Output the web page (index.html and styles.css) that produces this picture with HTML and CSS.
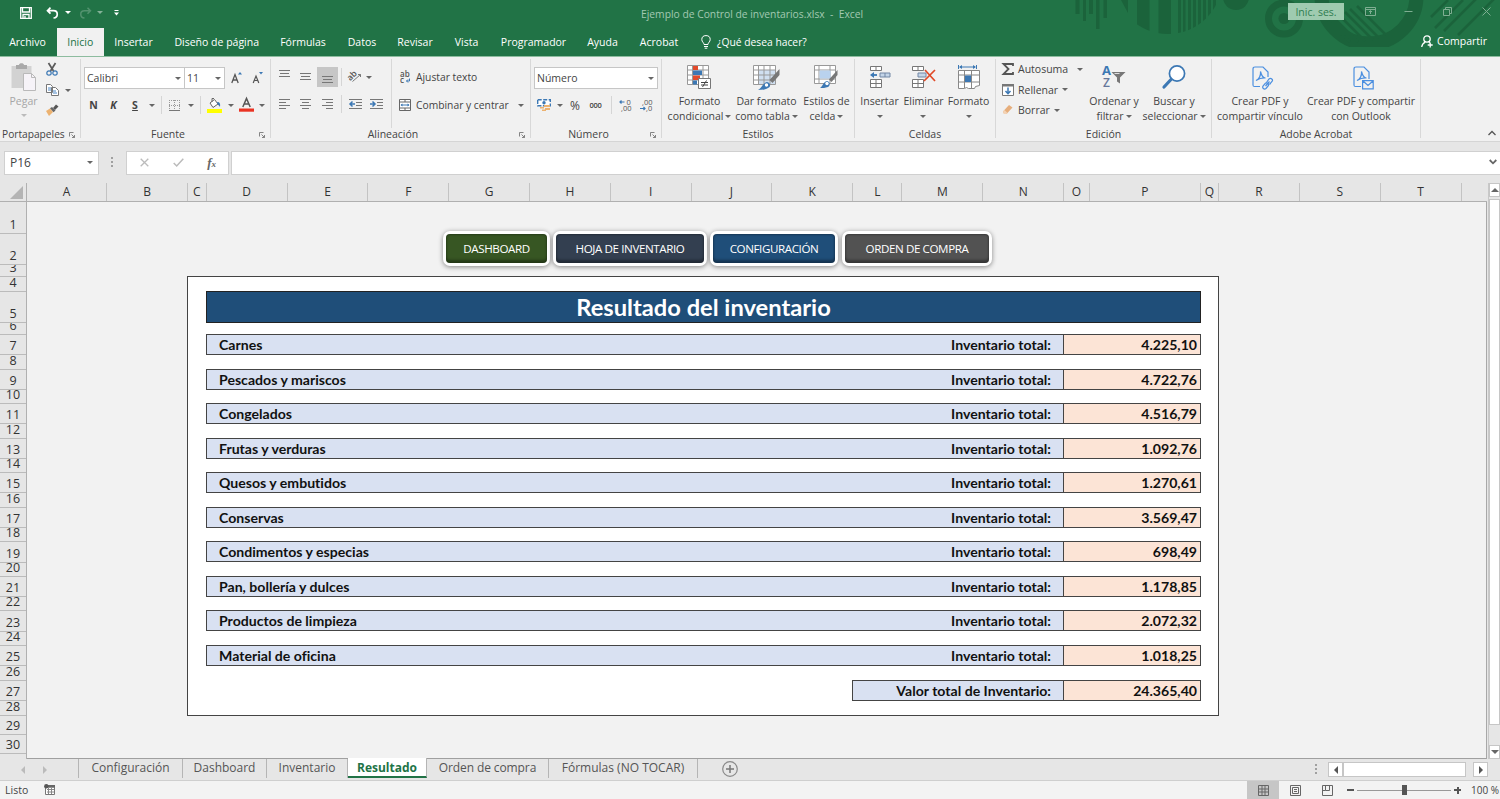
FILE: index.html
```html
<!DOCTYPE html>
<html lang="es">
<head>
  <meta charset="utf-8">
  <title>Ejemplo de Control de inventarios.xlsx - Excel</title>
  <link rel="stylesheet" href="styles.css">
</head>
<body>
  <header class="header">
    <svg class="header-art" width="440" height="56" viewBox="0 0 440 56">
      <defs>
        <clipPath id="disc"><circle cx="108" cy="-20" r="54"/></clipPath>
        <clipPath id="flat"><path d="M240 0H370V47H240Z"/></clipPath>
      </defs>
      <path d="M15.5 0h4v14h-4zM23 0h3v21h-3zM29 0h4v14h-4zM36 0h3.500v29H36zM43.500 0H47v18h-3.500z"/>
      <path clip-path="url(#disc)" d="M61 0h7v13zM77 0h12.500v40H77zM98.500 0H111v40H98.500zM118 0h3v40h-3zM123 0h2.500v40H123zM128 0h3v40h-3zM133 0h3v40h-3zM138 0h3v40h-3zM143 0h3v40h-3zM148 0h3v40h-3zM153 0h3v40h-3z"/>
      <circle cx="176" cy="-3" r="13"/>
      <circle cx="224" cy="18.500" r="5.500"/>
      <circle class="art-ring" cx="224" cy="18.500" r="15.500" stroke-width="7"/>
      <circle class="art-ring" clip-path="url(#flat)" cx="309" cy="-4" r="47.500" stroke-width="14"/>
      <path class="art-ring" stroke-width="2.600" d="M268 21l22 21M273 17l25 25M279 15l26 26M285 12l28 28M290 9l29 29M297 6l29 29M371 17l17-17M375 28l28-28M384 31l32-32M398 35l36-36"/>
    </svg>

    <div class="titlebar">
      <div class="quick-access">
        <svg width="12" height="12" viewBox="0 0 12 12"><path d="M.7.700h10.600v10.600H.7zM2.500 1v4h7V1M3 11V7.500h6V11M5 9v2" fill="none" stroke="#fff" stroke-width="1.300"/></svg>
        <svg width="13" height="12" viewBox="0 0 13 12"><path d="M4.500.700L1.500 3.700l3 3M2 3.700h5.500c5 0 5 6.800 0 7.300" fill="none" stroke="#fff" stroke-width="1.700"/></svg>
        <i class="caret light"></i>
        <svg class="dim" width="13" height="12" viewBox="0 0 13 12"><path d="M8.500.700l3 3-3 3M11 3.700H5.500c-5 0-5 6.800 0 7.300" fill="none" stroke="#8fb8a0" stroke-width="1.500"/></svg>
        <i class="caret light dim"></i>
        <svg width="5" height="6" viewBox="0 0 5 6"><path d="M.5.500h4" stroke="#fff"/><path d="M0 2.500h5L2.500 5.500z" fill="#fff"/></svg>
      </div>
      <div class="doc-title">Ejemplo de Control de inventarios.xlsx&nbsp; -&nbsp; Excel</div>
      <div class="window-tools">
        <button class="sign-in">Inic. ses.</button>
        <svg width="11" height="9" viewBox="0 0 11 9"><path d="M.5.500h10v8H.5zM.5 2.500h10M5.500 7V4M4 5l1.500-1.500L7 5"/></svg>
        <svg width="9" height="9" viewBox="0 0 9 9"><path d="M.5 4.500h8"/></svg>
        <svg width="9" height="9" viewBox="0 0 9 9"><path d="M.5 2.500h6v6h-6zM2.500 2.500v-2h6v6h-2"/></svg>
        <svg width="9" height="9" viewBox="0 0 9 9"><path d="M.5.500l8 8M8.500.500l-8 8"/></svg>
      </div>
    </div>

    <nav class="tabs">
      <a class="t-file">Archivo</a>
      <a class="t-home active">Inicio</a>
      <a class="t-insert">Insertar</a>
      <a class="t-layout">Diseño de página</a>
      <a class="t-formulas">Fórmulas</a>
      <a class="t-data">Datos</a>
      <a class="t-review">Revisar</a>
      <a class="t-view">Vista</a>
      <a class="t-dev">Programador</a>
      <a class="t-help">Ayuda</a>
      <a class="t-acrobat">Acrobat</a>
      <span class="tell-me">
        <svg width="10" height="14" viewBox="0 0 10 14"><path d="M3 9.500C3 7.500.8 7 .8 4.600a4.200 4 0 0 1 8.400 0C9.200 7 7 7.500 7 9.500zM3 11.500h4M3.700 13.200h2.600" fill="none" stroke="#fff"/></svg>
        ¿Qué desea hacer?
      </span>
      <span class="share">
        <svg width="12" height="13" viewBox="0 0 12 13"><circle cx="6" cy="4" r="3.200"/><path d="M.7 12c.3-2.500 1.500-3.800 3.500-4.800M7.800 7.200l1 .8M9.200 7.500v5M6.700 10h5"/></svg>
        Compartir
      </span>
    </nav>
  </header>

  <section class="ribbon">
    <div class="group g-clipboard">
      <div class="group-body">
        <div class="paste">
          <svg width="25" height="28" viewBox="0 0 25 28"><path d="M.5 3h20v22H.5z" fill="#d2d2d2"/><path d="M5 2h3c0-2.500 5-2.500 5 0h3v4H5z" fill="#a9a9a9"/><path d="M12.500 10.500h8l4 4v13h-12z" fill="#f6f3f8" stroke="#b9b9b9"/><path d="M20.500 10.500v4h4" fill="none" stroke="#b9b9b9"/></svg>
          <span>Pegar</span>
          <i class="caret pale"></i>
        </div>
        <div class="clip-tools">
          <svg width="12" height="13" viewBox="0 0 12 13"><path d="M2.500 0l5 8M9.500 0l-5 8" stroke="#5a5a5a" stroke-width="1.700"/><circle cx="3" cy="10" r="2.200" fill="none" stroke="#3c78b4" stroke-width="1.200"/><circle cx="9" cy="10" r="2.200" fill="none" stroke="#3c78b4" stroke-width="1.200"/></svg>
          <div class="copy">
            <svg width="13" height="12" viewBox="0 0 13 12"><path d="M.5.500h4l2 2v6h-6zM5.500 3.500h4l3 3v5h-7z" fill="#fff" stroke="#777"/><path d="M2 4h3M2 6h3M7 7h3M7 9h4" stroke="#4a86c5"/></svg>
            <i class="caret"></i>
          </div>
          <svg width="13" height="12" viewBox="0 0 13 12"><path d="M0 7l4-2.500 3 3.500-4 4z" fill="#ecb270"/><path d="M4 4.200L6 3l3.500 3.500-2 1.700z" fill="#666"/><path d="M7 4l3-3.500 2.500 2L9 6z" fill="#555"/></svg>
        </div>
      </div>
      <div class="group-name">Portapapeles<svg class="launcher"><use href="#launch"/></svg></div>
    </div>

    <div class="group g-font">
      <div class="group-body stack">
        <div class="tool-row">
          <div class="select font-name">Calibri<i class="caret"></i></div>
          <div class="select font-size">11<i class="caret"></i></div>
          <svg class="grow" width="11" height="13" viewBox="0 0 11 13"><path d="M.8 12L4 3.500 7.200 12M2 9h4" fill="none" stroke="#555" stroke-width="1.300"/><path d="M7 3.500L9 1l2 2.500z" fill="#3c78b4"/></svg>
          <svg class="shrink" width="11" height="13" viewBox="0 0 11 13"><path d="M1.200 12L4 5l2.800 7M2.200 9.500h3.600" fill="none" stroke="#555" stroke-width="1.200"/><path d="M7 1l2 2.500L11 1z" fill="#3c78b4"/></svg>
        </div>
        <div class="font-tools">
          <b>N</b>
          <b><em>K</em></b>
          <b><u>S</u></b>
          <i class="caret"></i>
          <span class="sep"></span>
          <svg width="11" height="11" viewBox="0 0 11 11"><path d="M.5 0v11M10.500 0v11M0 .500h11M5.500 0v11M0 5.500h11" stroke="#999" stroke-dasharray="1 1"/><path d="M0 10.500h11" stroke="#777"/></svg>
          <i class="caret"></i>
          <span class="sep"></span>
          <svg width="15" height="15" viewBox="0 0 15 15"><path d="M3 5l4.500-3.500L11 6 6 9.500z" fill="#fff" stroke="#666"/><path d="M5 4V.500h2" fill="none" stroke="#666"/><path d="M10 4c3 0 3.500 2 3 5-1-1.500-1.500-2-2-2z" fill="#3c78b4"/><path d="M0 11h15v4H0z" fill="#ff0"/></svg>
          <i class="caret"></i>
          <svg width="15" height="14" viewBox="0 0 15 14"><path d="M3.800 9L7.500.500 11.200 9M5 6h5" fill="none" stroke="#555" stroke-width="1.500"/><path d="M0 10.500h15v3.200H0z" fill="#ea3323"/></svg>
          <i class="caret"></i>
        </div>
      </div>
      <div class="group-name">Fuente<svg class="launcher"><use href="#launch"/></svg></div>
    </div>

    <div class="group g-align">
      <div class="group-body">
        <div class="align-tools">
          <svg class="up" width="11" height="8" viewBox="0 0 11 8"><path d="M0 .500h11M1 3.500h9M0 6.500h11"/></svg>
          <svg width="11" height="8" viewBox="0 0 11 8"><path d="M0 .500h11M1 3.500h9M0 6.500h11"/></svg>
          <span class="pressed"><svg width="11" height="8" viewBox="0 0 11 8"><path d="M0 .500h11M1 3.500h9M0 6.500h11"/></svg></span>
          <span class="sep"></span>
          <svg class="orient" width="14" height="14" viewBox="0 0 14 14"><text x="0" y="9" font-size="8.500" font-weight="600" transform="rotate(-45 5 8)">ab</text><path d="M4.500 12.500l8-7M12.500 5.500v2.500M12.500 5.500H10"/></svg>
          <i class="caret orient-caret"></i>
          <svg width="11" height="10" viewBox="0 0 11 10"><path d="M0 .500h11M0 3.500h7M0 6.500h11M0 9.500h7"/></svg>
          <svg width="11" height="10" viewBox="0 0 11 10"><path d="M0 .500h11M2 3.500h7M0 6.500h11M2 9.500h7"/></svg>
          <svg width="11" height="10" viewBox="0 0 11 10"><path d="M0 .500h11M4 3.500h7M0 6.500h11M4 9.500h7"/></svg>
          <span class="sep"></span>
          <svg width="13" height="11" viewBox="0 0 13 11"><path d="M0 .500h13M7 3.500h6M7 6.500h6M0 9.500h13"/><path class="blue" d="M2 5h4M3.500 2.500L1 5l2.500 2.500"/></svg>
          <svg width="13" height="11" viewBox="0 0 13 11"><path d="M0 .500h13M7 3.500h6M7 6.500h6M0 9.500h13"/><path class="blue" d="M0 5h4M2.500 2.500L5 5 2.500 7.500"/></svg>
        </div>
        <div class="wrap-tools">
          <div>
            <svg width="11" height="13" viewBox="0 0 11 13"><text x="0" y="6" font-size="8" font-weight="600">ab</text><text x="0" y="12" font-size="8" font-weight="600">c</text><path d="M9.500 7.500v2.500H6.500M8 8.500L6.500 10 8 11.500" fill="none" stroke="#3c78b4"/></svg>
            <span>Ajustar texto</span>
          </div>
          <div>
            <svg width="12" height="12" viewBox="0 0 12 12"><path d="M.5.500h11v11H.5zM.5 3h11M.5 9h11M6 .500V3M6 9v2.500" fill="#fff" stroke="#666"/><path d="M2 6h8" stroke="#3c78b4"/><path d="M1.500 6l2-1.500v3zM10.500 6l-2-1.500v3z" fill="#3c78b4"/></svg>
            <span>Combinar y centrar</span>
            <i class="caret"></i>
          </div>
        </div>
      </div>
      <div class="group-name">Alineación<svg class="launcher"><use href="#launch"/></svg></div>
    </div>

    <div class="group g-number">
      <div class="group-body stack">
        <div class="tool-row"><div class="select num-format">Número<i class="caret"></i></div></div>
        <div class="num-tools">
          <svg width="14" height="13" viewBox="0 0 14 13"><path d="M.7.700h12.600v6H.7z" fill="#fff" stroke="#3c78b4" stroke-width="1.400" stroke-dasharray="4 1.500"/><circle cx="7" cy="3.700" r="1.700" fill="#3c78b4"/><path d="M7 6h6v2H7zM8 9h5v2H8zM3 8h4v1.500H3zM5 10.500h4v1.500H5z" fill="#ecb270"/></svg>
          <i class="caret"></i>
          <span class="percent">%</span>
          <span class="thousands">000</span>
          <span class="sep"></span>
          <svg width="12" height="13" viewBox="0 0 12 13"><text x="7.500" y="6" font-size="7.500">0</text><text x="2" y="12" font-size="7.500">,00</text><path d="M5.500 3H1M2.500 1.500L1 3l1.500 1.500" fill="none" stroke="#3c78b4" stroke-width="1.200"/></svg>
          <svg width="12" height="13" viewBox="0 0 12 13"><text x="2" y="6" font-size="7.500">,00</text><text x="6" y="12" font-size="7.500">,0</text><path d="M0 9.500h5M3.500 8L5 9.500 3.500 11" fill="none" stroke="#3c78b4" stroke-width="1.200"/></svg>
        </div>
      </div>
      <div class="group-name">Número<svg class="launcher"><use href="#launch"/></svg></div>
    </div>

    <div class="group g-styles">
      <div class="group-body">
        <div class="big">
          <svg width="25" height="25" viewBox="0 0 25 25"><path d="M.5.500h21v19H.5zM.5 5h21M.5 10h21M.5 15h21M5.500.500v19M16 .500v19" fill="#fff" stroke="#999"/><path d="M6 1h5v4H6zM6 10.500h7V15H6z" fill="#e24b2c"/><path d="M6 5.500h9V10H6zM6 15.500h4v4H6z" fill="#3c78b4"/><path d="M11.500 13.500h12v10h-12z" fill="#fff" stroke="#777"/><path d="M14 17.500h7M14 20h7M19.500 15.500l-4 6.500" stroke="#444"/></svg>
          <span>Formato<br>condicional<i class="caret"></i></span>
        </div>
        <div class="big">
          <svg width="27" height="26" viewBox="0 0 27 26"><path d="M.5.500h22v19H.5z" fill="#fff"/><path d="M6 5h16v14H6z" fill="#d0dff0"/><path d="M.5.500h22v19H.5zM.5 5h22M.5 10h22M.5 15h22M5.500.500v19M11 .500v19M17 .500v19" fill="none" stroke="#999"/><path d="M26.500 4v6l-7 8-3-3z" fill="#777"/><path d="M5 25c3-1 5-7 9-8 4 1 4 5 1 6-3 2-7 2-10 2z" fill="#3c78b4"/><circle cx="13.500" cy="20" r="1.700" fill="#fff"/></svg>
          <span>Dar formato<br>como tabla<i class="caret"></i></span>
        </div>
        <div class="big">
          <svg width="25" height="25" viewBox="0 0 25 25"><path d="M.5.500h21v18H.5zM.5 5h21M.5 14h21M5 .500v18M16 .500v18" fill="#fff" stroke="#999"/><path d="M5.500 5.500h11v8h-11z" fill="#b9d2ee"/><path d="M23.500 5v5l-6 7-2.500-2.500z" fill="#777"/><path d="M6 23c3-2 3-6 7-7 4 1 3 5 1 6-3 1-5 1-8 1z" fill="#3c78b4"/><circle cx="13" cy="18.500" r="1.700" fill="#fff"/></svg>
          <span>Estilos de<br>celda<i class="caret"></i></span>
        </div>
      </div>
      <div class="group-name">Estilos</div>
    </div>

    <div class="group g-cells">
      <div class="group-body">
        <div class="big">
          <svg width="22" height="24" viewBox="0 0 22 24"><path d="M1.500 1.500h11v4h-11zM7 1.500v4M1.500 14.500h11v8h-11zM7 14.500v8M1.500 18.500h11" fill="#fff" stroke="#777"/><path d="M11 8h10v4H11zM16 8v4" fill="#c4d5e8" stroke="#7387a5"/><path d="M3 10h5" stroke="#3c78b4" stroke-width="1.800"/><path d="M1 10l4-3v6z" fill="#3c78b4"/></svg>
          <span>Insertar<br><i class="caret"></i></span>
        </div>
        <div class="big">
          <svg width="25" height="24" viewBox="0 0 25 24"><path d="M1.500 1.500h11v4h-11zM7 1.500v4M1.500 14.500h11v8h-11zM7 14.500v8M1.500 18.500h11" fill="#fff" stroke="#777"/><path d="M7 8h8v4H7z" fill="#c4d5e8" stroke="#7387a5"/><path d="M14 5l10 11M24 5L13 16" stroke="#e04a28" stroke-width="1.700"/></svg>
          <span>Eliminar<br><i class="caret"></i></span>
        </div>
        <div class="big">
          <svg width="24" height="25" viewBox="0 0 24 25"><path d="M1.500 0v4M19.500 0v4M3 2h15" stroke="#3c78b4"/><path d="M2 2l3-2v4zM19 2l-3-2v4z" fill="#3c78b4"/><path d="M1.500 5.500h21v15l-4 1-1 2h-6l-2-1-2 1h-6zM1.500 10h21M1.500 17h21M7.500 5.500V23M14.500 5.500V23" fill="#fff" stroke="#888"/><path d="M8 10.500h6V17H8z" fill="#3c78b4"/></svg>
          <span>Formato<br><i class="caret"></i></span>
        </div>
      </div>
      <div class="group-name">Celdas</div>
    </div>

    <div class="group g-edit">
      <div class="group-body">
        <div class="edit-list">
          <div class="autosum"><svg width="12" height="12" viewBox="0 0 12 12"><path d="M11 3V1H1.500l5 5-5 5H11V9" fill="none" stroke="#555" stroke-width="1.800"/></svg>Autosuma<i class="caret"></i></div>
          <div><svg width="12" height="12" viewBox="0 0 12 12"><path d="M.5.500h11v11H.5z" fill="#fff" stroke="#777"/><path d="M0 0h12v2.500H0z" fill="#777"/><path d="M6 3.500V10M3.500 7L6 9.700 8.500 7" fill="none" stroke="#3c78b4" stroke-width="1.500"/></svg>Rellenar<i class="caret"></i></div>
          <div><svg width="12" height="12" viewBox="0 0 12 12"><path d="M1 7.500L7 1l3.500 2.500-6 6.500H2z" fill="#e6ae7c"/><path d="M1 7.500L2.500 6 5.500 9l-1 1H2z" fill="#f3d3b5"/></svg>Borrar<i class="caret"></i></div>
        </div>
        <div class="big">
          <svg width="24" height="24" viewBox="0 0 24 24"><text class="sort-a" x="0" y="10" font-size="13" font-weight="700">A</text><text class="sort-z" x="1" y="21.500" font-size="12" font-weight="600">Z</text><path d="M9.500 7h14l-5.500 5.500v6l-3-2v-4z" fill="#777"/><path d="M12.500 8.500h5" stroke="#ddd"/></svg>
          <span>Ordenar y<br>filtrar<i class="caret"></i></span>
        </div>
        <div class="big">
          <svg width="24" height="25" viewBox="0 0 24 25"><circle cx="15" cy="8.500" r="7.600" fill="#fff" stroke="#3c78b4" stroke-width="1.700"/><path d="M9 14.500L2 22" stroke="#3c78b4" stroke-width="3.200" stroke-linecap="round"/></svg>
          <span>Buscar y<br>seleccionar<i class="caret"></i></span>
        </div>
      </div>
      <div class="group-name">Edición</div>
    </div>

    <div class="group g-acrobat">
      <div class="group-body">
        <div class="big">
          <svg class="pdf-icon" width="21" height="24" viewBox="0 0 21 24" fill="none" stroke="#4b8fe0" stroke-width="1.200"><path d="M8 20.500H2.500Q1 20.500 1 19V3q0-2 2-2h8l5 5v5M4 14.500c3-1 5-5 4.500-9 1 4 2.500 6.500 5 6.500-4-.500-7 1-9.500 2.500z"/><path d="M14.500 16.500l2.500-3.500c2-1.500 4.500.500 3 2.500l-2.500 3M15.500 17l-2 0-2.500 3c-1 2 1 4 3 2.500l2.500-3v-2M13.500 20l4-4.500"/></svg>
          <span>Crear PDF y<br>compartir vínculo</span>
        </div>
        <div class="big">
          <svg class="pdf-icon" width="21" height="24" viewBox="0 0 21 24" fill="none" stroke="#4b8fe0" stroke-width="1.200"><path d="M8 20.500H2.500Q1 20.500 1 19V3q0-2 2-2h8l5 5v7M4 14.500c3-1 5-5 4.500-9 1 4 2.500 6.500 5 6.500-4-.500-7 1-9.500 2.500z"/><path d="M9.600 14.600h10.600v8.200H9.600zM10 15l5 4.500 5-4.500"/></svg>
          <span>Crear PDF y compartir<br>con Outlook</span>
        </div>
      </div>
      <div class="group-name">Adobe Acrobat</div>
    </div>
    <svg class="collapse" width="8" height="6" viewBox="0 0 8 6"><path d="M.5 5L4 1.500 7.500 5" fill="none" stroke="#555" stroke-width="1.300"/></svg>
  </section>

  <section class="formula-bar">
    <div class="name-box">P16<i class="caret"></i></div>
    <span class="dots"></span>
    <div class="fx-tools">
      <svg width="9" height="9" viewBox="0 0 9 9"><path d="M.7.700l7.600 7.600M8.300.700L.7 8.300" stroke="#bbb" stroke-width="1.300"/></svg>
      <svg width="11" height="9" viewBox="0 0 11 9"><path d="M.7 5l3 3L10.300.700" fill="none" stroke="#bbb" stroke-width="1.500"/></svg>
      <span class="fx">f<small>x</small></span>
    </div>
    <div class="formula-input">
      <svg width="8" height="6" viewBox="0 0 8 6"><path d="M.7 1L4 4.300 7.300 1" fill="none" stroke="#666" stroke-width="1.800"/></svg>
    </div>
  </section>

  <main class="workbook">
    <div class="corner"><svg width="13" height="13" viewBox="0 0 13 13"><path d="M13 0v13H0z" fill="#b4b4b4"/></svg></div>
    <div class="col-heads">
      <span>A</span><span>B</span><span>C</span><span>D</span><span>E</span><span>F</span><span>G</span><span>H</span><span>I</span><span>J</span><span>K</span><span>L</span><span>M</span><span>N</span><span>O</span><span>P</span><span>Q</span><span>R</span><span>S</span><span>T</span>
    </div>
    <div class="row-heads">
      <span>1</span><span>2</span><span>3</span><span>4</span><span>5</span><span>6</span><span>7</span><span>8</span><span>9</span><span>10</span><span>11</span><span>12</span><span>13</span><span>14</span><span>15</span><span>16</span><span>17</span><span>18</span><span>19</span><span>20</span><span>21</span><span>22</span><span>23</span><span>24</span><span>25</span><span>26</span><span>27</span><span>28</span><span>29</span><span>30</span>
    </div>
    <div class="sheet">
      <div class="nav-buttons">
        <button class="nav-green">DASHBOARD</button>
        <button class="nav-navy">HOJA DE INVENTARIO</button>
        <button class="nav-blue">CONFIGURACIÓN</button>
        <button class="nav-gray">ORDEN DE COMPRA</button>
      </div>
      <div class="report">
        <h1>Resultado del inventario</h1>
        <div class="line"><span class="cat">Carnes</span><span class="label">Inventario total:</span><span class="value">4.225,10</span></div>
        <div class="line"><span class="cat">Pescados y mariscos</span><span class="label">Inventario total:</span><span class="value">4.722,76</span></div>
        <div class="line"><span class="cat">Congelados</span><span class="label">Inventario total:</span><span class="value">4.516,79</span></div>
        <div class="line"><span class="cat">Frutas y verduras</span><span class="label">Inventario total:</span><span class="value">1.092,76</span></div>
        <div class="line"><span class="cat">Quesos y embutidos</span><span class="label">Inventario total:</span><span class="value">1.270,61</span></div>
        <div class="line"><span class="cat">Conservas</span><span class="label">Inventario total:</span><span class="value">3.569,47</span></div>
        <div class="line"><span class="cat">Condimentos y especias</span><span class="label">Inventario total:</span><span class="value">698,49</span></div>
        <div class="line"><span class="cat">Pan, bollería y dulces</span><span class="label">Inventario total:</span><span class="value">1.178,85</span></div>
        <div class="line"><span class="cat">Productos de limpieza</span><span class="label">Inventario total:</span><span class="value">2.072,32</span></div>
        <div class="line"><span class="cat">Material de oficina</span><span class="label">Inventario total:</span><span class="value">1.018,25</span></div>
        <div class="line total"><span class="label">Valor total de Inventario:</span><span class="value">24.365,40</span></div>
      </div>
    </div>
    <div class="vscroll">
      <span class="arrow"><i class="tri up"></i></span>
      <span class="thumb"></span>
      <span class="arrow"><i class="tri down"></i></span>
    </div>
  </main>

  <footer>
    <div class="sheet-tabs">
      <i class="tri left faint"></i>
      <i class="tri right faint"></i>
      <div class="sheets">
        <a class="s1">Configuración</a>
        <a class="s2">Dashboard</a>
        <a class="s3">Inventario</a>
        <a class="s4 current">Resultado</a>
        <a class="s5">Orden de compra</a>
        <a class="s6">Fórmulas (NO TOCAR)</a>
      </div>
      <svg class="add" width="16" height="16" viewBox="0 0 16 16"><circle cx="8" cy="8" r="7.300" fill="none" stroke="#8a8a8a" stroke-width="1.200"/><path d="M8 4v8M4 8h8" stroke="#777" stroke-width="1.500"/></svg>
      <span class="dots"></span>
      <div class="hscroll">
        <span class="arrow"><i class="tri left"></i></span>
        <span class="thumb"></span>
        <span class="arrow"><i class="tri right"></i></span>
      </div>
    </div>
    <div class="status">
      <span>Listo</span>
      <svg class="macro" width="11" height="11" viewBox="0 0 11 11"><path d="M1.500 3h9v7.500h-9z" fill="#fff" stroke="#777"/><path d="M4 1h7v2.500H4z" fill="#666"/><path d="M3 5.500h7M3 8h7M4.500 4v6M7.500 4v6" stroke="#888"/><circle cx="2.300" cy="2.300" r="2.200" fill="#555"/></svg>
      <div class="views">
        <span class="on"><svg width="11" height="11" viewBox="0 0 11 11"><path d="M.5.500h10v10H.5zM.5 4h10M.5 7h10M4 .500v10M7 .500v10"/></svg></span>
        <span><svg width="11" height="11" viewBox="0 0 11 11"><path d="M.5.500h10v10H.5zM2.500 2.500h6v6h-6zM4 4.500h3M4 6.500h3"/></svg></span>
        <span><svg width="11" height="11" viewBox="0 0 11 11"><path d="M.5.500h10v10H.5zM3.500.500v5h4v-5M.5 5.500h3"/></svg></span>
      </div>
      <div class="zoom">
        <span class="minus"></span>
        <span class="track"><span class="knob"></span></span>
        <span class="plus"></span>
        <span class="percent-text">100 %</span>
      </div>
    </div>
  </footer>

  <svg class="defs">
    <symbol id="launch" viewBox="0 0 6 6"><path d="M.5 4.500v-4h4M2.500 2.500l3 3M5.500 3v2.500H3" fill="none" stroke="#777" stroke-width=".9"/></symbol>
  </svg>
</body>
</html>
```
FILE: styles.css
```css
* {
  box-sizing: border-box;
}

body {
  margin: 0;
  height: 799px;
  display: flex;
  flex-direction: column;
  overflow: hidden;
  font-family: "Open Sans", "Noto Sans", sans-serif;
  font-size: 10.5px;
  color: #444;
  background: #e6e6e6;
}

body > * {
  flex: none;
}

svg {
  display: block;
  flex: none;
  overflow: visible;
}

svg text {
  fill: #555;
}

svg .sort-a { fill: #3c78b4; }
svg .sort-z { fill: #66779b; }

button {
  border: none;
  padding: 0;
  font: inherit;
}

.defs {
  width: 0;
  height: 0;
  position: absolute;
}

/* small triangles */
.caret {
  display: inline-block;
  flex: none;
  border: 3px solid transparent;
  border-top: 3px solid #666;
  border-bottom: 0;
}

.caret.light { border-top-color: #fff; }
.caret.pale { border-top-color: #bbb; }
.dim { opacity: 0.45; }

.tri {
  border: 4px solid transparent;
}

.tri.up { border-bottom-color: #666; border-top: 0; }
.tri.down { border-top-color: #666; border-bottom: 0; }
.tri.left { border-right-color: #555; border-left: 0; }
.tri.right { border-left-color: #555; border-right: 0; }
.tri.left.faint { border-right-color: #bbb; }
.tri.right.faint { border-left-color: #bbb; }

/* header */
.header {
  position: relative;
  height: 57px;
  background: #217346;
  border-bottom: 1px solid #8dbc9f;
  color: #fff;
}

.header-art {
  position: absolute;
  top: 0;
  right: 0;
  fill: #1b633b;
  overflow: hidden;
}

.art-ring {
  fill: none;
  stroke: #1b633b;
}

.titlebar {
  position: relative;
  height: 28px;
  display: flex;
  justify-content: space-between;
}

.quick-access {
  width: 641px;
  padding: 0 0 3px 20px;
  display: flex;
  align-items: center;
}

.quick-access > :nth-child(2) { margin-left: 14px; }
.quick-access > :nth-child(3) { margin-left: 6px; }
.quick-access > :nth-child(4) { margin-left: 8px; }
.quick-access > :nth-child(5) { margin-left: 5px; }
.quick-access > :nth-child(6) { margin-left: 11px; }

.doc-title {
  flex: 1;
  line-height: 28px;
  font-size: 10.3px;
  color: #a3c9b2;
  white-space: nowrap;
}

.window-tools {
  display: flex;
  align-items: center;
  padding: 0 9px 5px 0;
}

.window-tools svg {
  fill: none;
  stroke: #7fae92;
  margin-left: 30px;
}

.window-tools .sign-in + svg {
  margin-left: 21px;
}

.window-tools :nth-child(3) {
  margin-left: 28px;
}

.sign-in {
  width: 56px;
  height: 17px;
  background: #9fcbb0;
  color: #2f7d51;
}

.tabs {
  position: relative;
  height: 28px;
  display: flex;
  line-height: 29px;
  white-space: nowrap;
}

.tabs a {
  text-align: center;
}

.tabs .active {
  background: #f1f1f1;
  color: #217346;
}

.t-file { width: 57px; padding-right: 2px; }
.t-home { width: 46.500px; }
.t-insert { width: 60px; }
.t-layout { width: 106.500px; }
.t-formulas { width: 66px; }
.t-data { width: 52px; }
.t-review { width: 54px; }
.t-view { width: 49px; }
.t-dev { width: 85px; }
.t-help { width: 53px; }
.t-acrobat { width: 60px; }

.tell-me {
  display: flex;
  align-items: center;
  gap: 6px;
  margin-left: 12px;
  font-size: 10.3px;
}

.share {
  margin-left: auto;
  margin-right: 13px;
  padding-bottom: 2px;
  display: flex;
  align-items: center;
  gap: 4px;
}

.share svg {
  fill: none;
  stroke: #fff;
  stroke-width: 1.3;
}

/* ribbon */
.ribbon {
  height: 85px;
  background: #f1f1f1;
  border-bottom: 1px solid #d5d5d5;
  display: flex;
  padding-top: 2px;
  white-space: nowrap;
}

.group {
  height: 79px;
  border-right: 1px solid #d8d8d8;
  display: flex;
  flex-direction: column;
  flex: none;
}

.g-clipboard { width: 81px; }
.g-font { width: 190px; }
.g-align { width: 260px; }
.g-number { width: 131px; }
.g-styles { width: 193px; }
.g-cells { width: 141px; }
.g-edit { width: 216px; }
.g-acrobat { width: 209px; }

.group-body {
  flex: 1;
  display: flex;
}

.group-body.stack {
  flex-direction: column;
}

.group-name {
  position: relative;
  height: 13px;
  line-height: 13px;
  margin-bottom: -3px;
  text-align: center;
}

.g-clipboard .group-name {
  text-align: left;
  padding-left: 2px;
  font-size: 10.2px;
}

.g-font .group-name,
.g-align .group-name,
.g-number .group-name {
  padding-right: 15px;
}

.launcher {
  position: absolute;
  right: 5px;
  top: 4px;
  width: 6px;
  height: 6px;
}

.sep {
  width: 1px;
  height: 18px;
  background: #d5d5d5;
}

.select {
  height: 22px;
  background: #fff;
  border: 1px solid #c6c6c6;
  padding: 0 3px 0 2px;
  display: flex;
  align-items: center;
  justify-content: space-between;
}

.paste {
  width: 40px;
  padding: 4px 0 0 7px;
  display: flex;
  flex-direction: column;
  align-items: center;
  color: #a6a6a6;
}

.paste span {
  line-height: 16px;
  margin-top: 2px;
}

.paste .caret {
  margin-top: 5px;
}

.clip-tools {
  padding: 4px 0 0 6px;
  display: flex;
  flex-direction: column;
  gap: 8px;
}

.copy {
  display: flex;
  align-items: center;
  gap: 6px;
}

.tool-row {
  display: flex;
  align-items: center;
  margin: 8px 0 0 3px;
}

.font-name { width: 101px; }
.font-size { width: 41px; margin-left: -1px; }
.grow { margin: 0 0 2px 6px; }
.shrink { margin: 0 0 2px 10px; }
.num-format { width: 124px; }

.font-tools {
  display: grid;
  grid-template-columns: 19px 21px 22px 11px 8px 18px 15px 4px 24px 9px 22px 10px;
  align-items: center;
  justify-items: center;
  height: 20px;
  margin: 6px 0 0 3px;
}

.align-tools {
  display: grid;
  grid-template-columns: 22px 21px 22px 6px 22px 21px;
  grid-template-rows: 20px 20px;
  row-gap: 7px;
  align-items: center;
  justify-items: center;
  width: 121px;
  padding: 8px 0 4px 2px;
  border-right: 1px solid #d8d8d8;
}

.align-tools path {
  fill: none;
  stroke: #777;
}

.align-tools .blue {
  stroke: #3c78b4;
  stroke-width: 1.5;
}

.align-tools .up { margin-bottom: 7px; }

.orient { margin-bottom: 3px; }

.orient-caret {
  justify-self: start;
}

.pressed {
  width: 21px;
  height: 20px;
  background: #c6c6c6;
  display: flex;
  align-items: flex-end;
  justify-content: center;
  padding-bottom: 3px;
}

.wrap-tools {
  padding: 8px 0 0 7px;
}

.wrap-tools div {
  display: flex;
  align-items: center;
  height: 20px;
  margin-bottom: 8px;
}

.wrap-tools span {
  margin-left: 5px;
  font-size: 10.300px;
}

.wrap-tools div:first-child {
  padding-left: 1px;
}

.wrap-tools .caret {
  margin-left: 9px;
}

.num-tools {
  display: grid;
  grid-template-columns: 19px 14px 16px 25px 6px 21px 21px;
  align-items: center;
  justify-items: center;
  height: 20px;
  margin: 6px 0 0 3px;
}

.percent { font-size: 12px; }
.thousands { font-size: 7.5px; font-weight: 600; letter-spacing: -0.3px; }

.big {
  display: flex;
  flex-direction: column;
  align-items: center;
  text-align: center;
  line-height: 15px;
}

.big svg {
  margin: 6px 0 0;
}

.big span {
  margin-top: auto;
  padding-bottom: 4px;
}

.big .caret {
  margin-left: 2px;
  vertical-align: 2px;
}

.g-styles .group-body {
  display: grid;
  grid-template-columns: 67px 67px 53px;
  padding-left: 4px;
}

.g-cells .group-body {
  display: grid;
  grid-template-columns: 43px 45px 45px;
  padding-left: 3px;
}

.g-cells .caret {
  margin-left: 0;
}

.g-edit .group-body {
  display: grid;
  grid-template-columns: 88px 60px 60px;
}

.g-acrobat .group-body {
  display: grid;
  grid-template-columns: 92px 110px;
  padding-left: 2px;
}

.big .pdf-icon {
  margin: 7px 0 0 4px;
}

.edit-list {
  padding-left: 6px;
}

.edit-list div {
  height: 20.500px;
  display: flex;
  align-items: center;
  gap: 4px;
}

.autosum .caret {
  margin-left: 5px;
}

.collapse {
  margin: 71px 4px 0 auto;
}

/* formula bar */
.formula-bar {
  height: 41px;
  padding: 8px 0 8px 4px;
  display: flex;
  align-items: center;
}

.name-box,
.fx-tools,
.formula-input {
  height: 24px;
  background: #fff;
  border: 1px solid #d0d0d0;
}

.name-box {
  width: 95px;
  padding: 0 5px;
  display: flex;
  align-items: center;
  justify-content: space-between;
  font-size: 12px;
}

.dots {
  width: 2px;
  height: 11px;
  margin: 0 13px 0 12px;
  background: repeating-linear-gradient(#a0a0a0 0 2px, transparent 2px 4px);
}

.fx-tools {
  width: 103px;
  padding: 0 12px 0 13px;
  display: flex;
  align-items: center;
  justify-content: space-between;
}

.fx {
  font-family: "Liberation Serif", serif;
  font-style: italic;
  font-weight: bold;
  font-size: 13px;
  color: #666;
}

.fx small {
  font-size: 9px;
}

.formula-input {
  flex: 1;
  margin-left: 2px;
  border-right: none;
  padding: 7px 3px 0 0;
}

.formula-input svg {
  margin-left: auto;
}

/* grid */
.workbook {
  height: 576px;
  display: grid;
  grid-template-columns: 27px 1460px 13px;
  grid-template-rows: 19px 557px;
  color: #333;
}

.corner {
  display: flex;
  justify-content: flex-end;
  padding: 3px 3px 0 0;
  border-right: 1px solid #b0b0b0;
  border-bottom: 1px solid #b0b0b0;
}

.col-heads {
  display: grid;
  grid-template-columns: 80.200px 80.800px 18.800px 80.800px 80.800px 80.800px 80.800px 80.800px 80.800px 80.800px 80.800px 49.300px 80.800px 80.800px 25.800px 110.800px 18.500px 80.800px 80.800px 80.800px;
  border-bottom: 1px solid #b0b0b0;
  font-size: 12px;
  line-height: 17px;
  text-align: center;
}

.col-heads span {
  border-right: 1px solid #c3c3c3;
}

.row-heads {
  display: grid;
  grid-template-rows: 32px 30.500px 12.500px 15px 31px 12px repeat(9, 20.300px 14.250px) 20.300px 15.200px 20px 14.800px 19px 19px;
  border-right: 1px solid #b0b0b0;
  font-size: 12.5px;
  text-align: center;
}

.row-heads span {
  display: flex;
  align-items: flex-end;
  justify-content: center;
  line-height: 17px;
  border-bottom: 1px solid #bbb;
  overflow: hidden;
}

.sheet {
  background: #f2f2f2;
  border-right: 1px solid #a8a8a8;
  border-bottom: 1px solid #a0a0a0;
}

.nav-buttons {
  display: flex;
  padding: 32px 0 0 419px;
  height: 74px;
  font-size: 11.6px;
}

.nav-buttons button {
  height: 29px;
  border-radius: 4px;
  color: #fff;
  letter-spacing: -0.4px;
  padding-bottom: 1px;
  box-shadow: 0 0 0 3px #fff, 0 1px 5px 3px rgba(0, 0, 0, 0.45), inset 0 -3px 3px rgba(0, 0, 0, 0.35), inset 0 1px 2px rgba(0, 0, 0, 0.3);
}

.nav-green { width: 101px; margin-right: 9px; background: #375623; }
.nav-navy { width: 148px; margin-right: 9px; background: #333f50; }
.nav-buttons .nav-blue { width: 122px; margin-right: 10px; padding-bottom: 0; background: #1f4e79; }
.nav-buttons .nav-gray { width: 144px; padding-bottom: 0; background: #525252; }

.report {
  width: 1032px;
  height: 440px;
  margin-left: 160px;
  padding: 14px 17px 0 18px;
  background: #fff;
  border: 1px solid #444;
  color: #111;
  font-family: Lato, "Open Sans", sans-serif;
  font-size: 14.1px;
  font-weight: 700;
  font-variant-ligatures: none;
}

.report h1 {
  height: 32px;
  margin: 0 0 11px;
  background: #1f4e79;
  border: 1px solid #222;
  color: #fff;
  font-size: 23.7px;
  line-height: 31px;
  text-align: center;
}

.line {
  display: flex;
  height: 21px;
  margin-bottom: 13.550px;
  line-height: 20px;
  border: 1px solid #444;
  background: #d9e1f2;
}

.cat {
  flex: 1;
  padding-left: 12px;
}

.label {
  padding-right: 12px;
}

.value {
  width: 137px;
  padding-right: 3px;
  border-left: 1px solid #444;
  background: #fce4d6;
  text-align: right;
}

.total {
  width: 349px;
  margin-left: auto;
  margin-top: 14.500px;
  justify-content: flex-end;
}

.vscroll {
  grid-column: 3;
  grid-row: 1 / 3;
  margin-left: 1px;
  display: flex;
  flex-direction: column;
  border-left: 1px solid #c8c8c8;
}

.vscroll .arrow {
  height: 14px;
  background: #fff;
  border: 1px solid #c6c6c6;
  display: flex;
  align-items: center;
  justify-content: center;
}

.vscroll .thumb {
  height: 526px;
  margin: 2px 0 20px;
  background: #fff;
  border: 1px solid #c6c6c6;
}

/* sheet tabs */
.sheet-tabs {
  height: 22px;
  display: flex;
  align-items: center;
  border-bottom: 1px solid #cfcfcf;
}

.sheet-tabs > .left { margin-left: 21px; }
.sheet-tabs > .right { margin-left: 18px; }

.sheets {
  display: flex;
  height: 100%;
  margin-left: 31px;
  padding-bottom: 2px;
  font-size: 12px;
  line-height: 17px;
  text-align: center;
  white-space: nowrap;
  color: #555;
}

.sheets a {
  border-right: 1px solid #b5b5b5;
}

.s1 { width: 105px; border-left: 1px solid #b5b5b5; }
.s2 { width: 84px; }
.s3 { width: 81px; }
.s4 { width: 79px; }
.s5 { width: 122px; letter-spacing: -0.1px; }
.s6 { width: 149px; }

.sheets .current {
  margin-top: -1px;
  background: #fff;
  border-bottom: 2px solid #217346;
  color: #217346;
  font-weight: 700;
  line-height: 19px;
}

.add {
  margin: 0 0 1px 24px;
}

.sheet-tabs .dots {
  margin: 0 11px 0 auto;
}

.hscroll {
  display: flex;
  width: 160px;
  height: 15px;
  margin-right: 12px;
}

.hscroll span {
  background: #fff;
  border: 1px solid #c6c6c6;
}

.hscroll .arrow {
  width: 15px;
  display: flex;
  align-items: center;
  justify-content: center;
}

.hscroll .thumb {
  width: 123px;
  margin-right: 7px;
}

/* status bar */
.status {
  height: 18px;
  background: #f3f3f3;
  display: flex;
  align-items: center;
  padding-left: 5px;
}

.macro {
  margin: 0 0 2px 16px;
}

.views {
  display: flex;
  height: 100%;
  margin-left: auto;
}

.views span {
  width: 32px;
  display: flex;
  align-items: center;
  justify-content: center;
}

.views .on {
  background: #c6c6c6;
}

.views svg {
  fill: none;
  stroke: #666;
}

.zoom {
  display: flex;
  align-items: center;
  width: 157px;
  padding-left: 4px;
  white-space: nowrap;
}

.percent-text {
  font-size: 10px;
}

.minus {
  width: 7px;
  height: 2px;
  background: #555;
}

.plus {
  width: 7px;
  height: 7px;
  margin-right: 10px;
  background: linear-gradient(#555, #555) center / 7px 2px no-repeat, linear-gradient(#555, #555) center / 2px 7px no-repeat;
}

.track {
  width: 94px;
  height: 1px;
  margin: 0 3px;
  background: #999;
  display: flex;
  align-items: center;
  justify-content: center;
}

.knob {
  width: 5px;
  height: 10px;
  background: #555;
}
```
